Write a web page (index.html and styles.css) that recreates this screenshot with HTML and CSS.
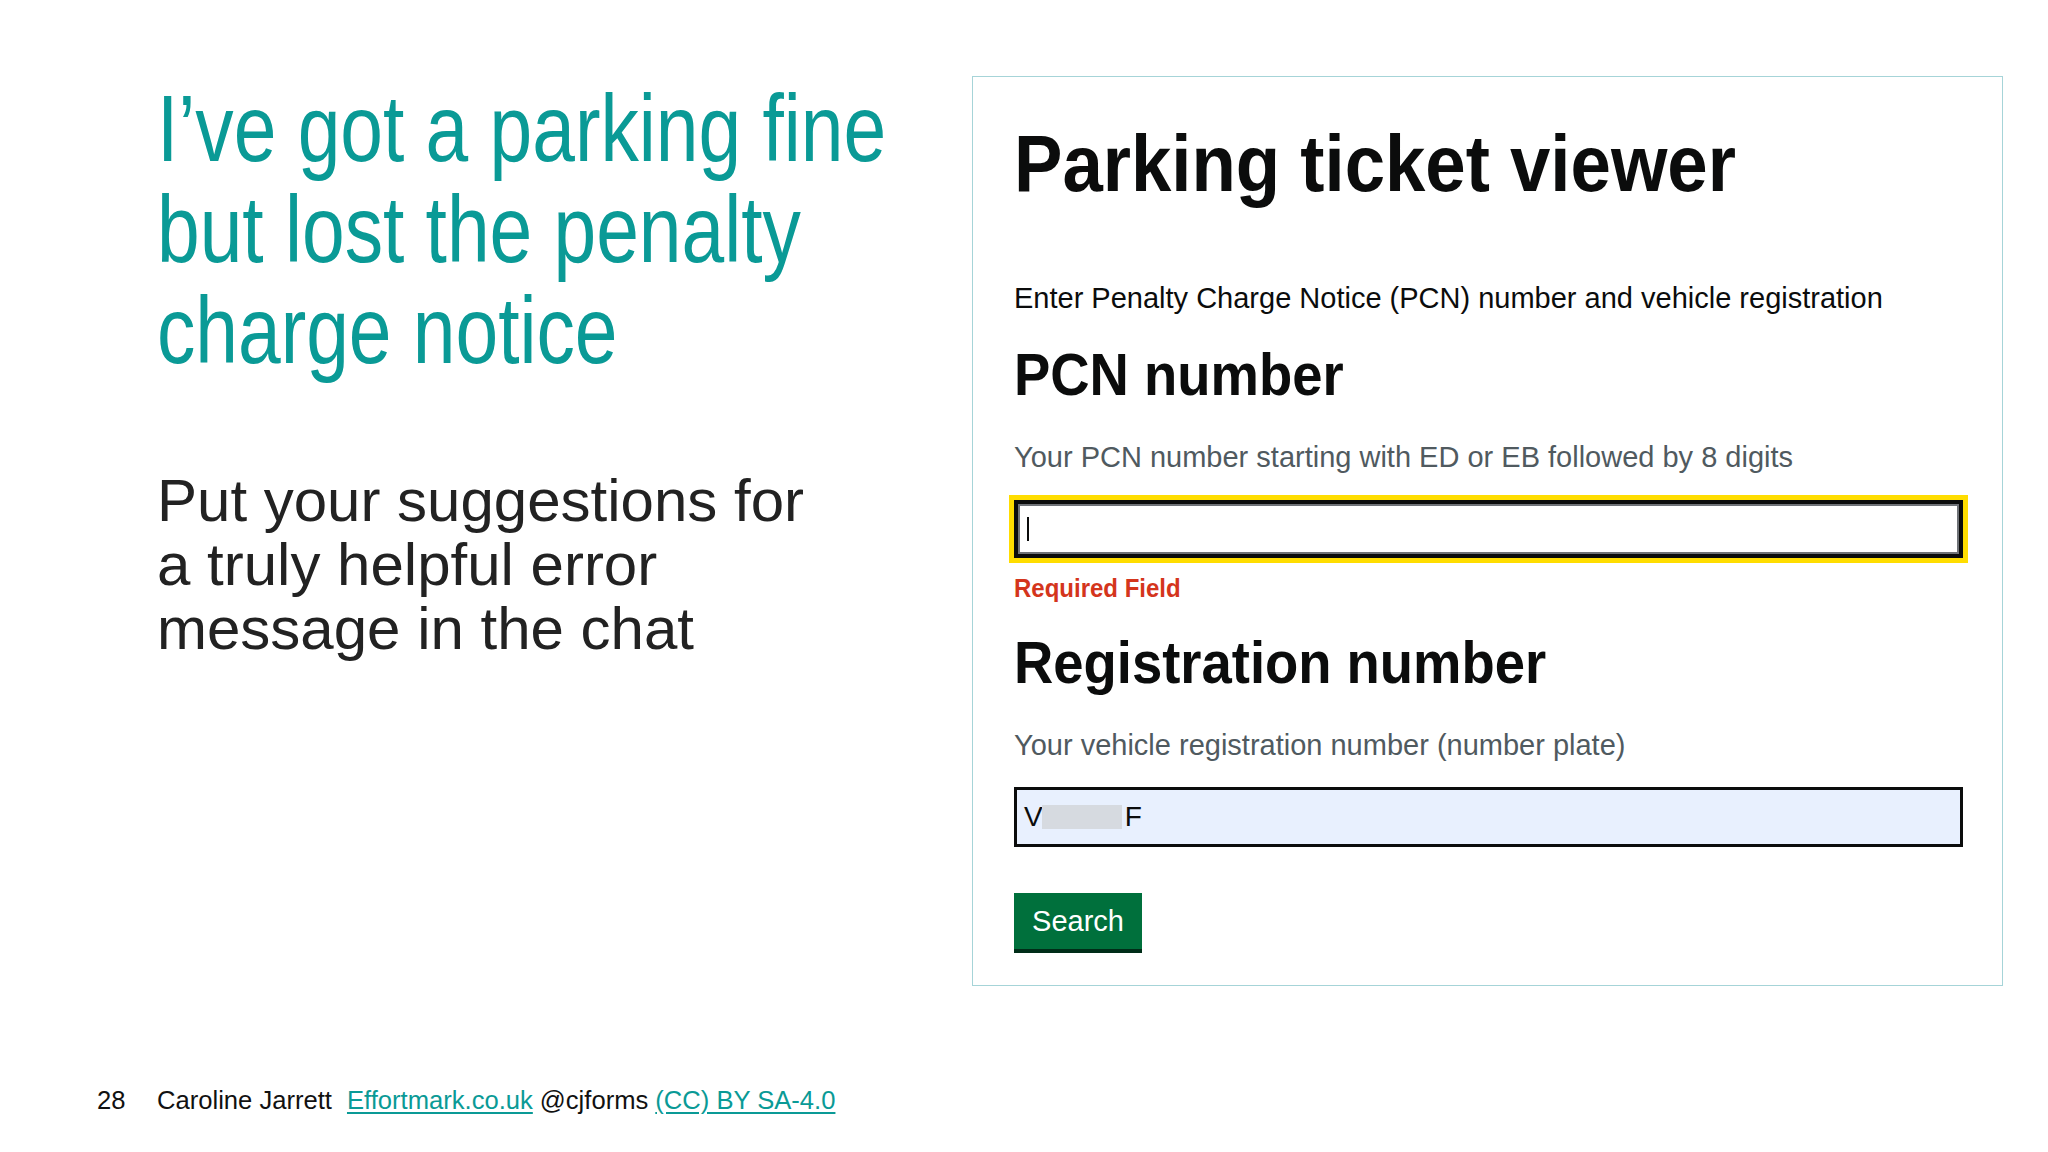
FILE: index.html
```html
<!DOCTYPE html>
<html lang="en">
<head>
<meta charset="utf-8">
<title>Parking ticket viewer</title>
<link rel="stylesheet" href="styles.css">
</head>
<body>
<div class="slide">
  <main class="main">
    <section class="left">
      <h1 class="title">I’ve got a parking fine<br>but lost the penalty<br>charge notice</h1>
      <p class="prompt">Put your suggestions for<br>a truly helpful error<br>message in the chat</p>
    </section>
    <section class="panel">
      <h2 class="pt-title squeeze">Parking ticket viewer</h2>
      <p class="intro">Enter Penalty Charge Notice (PCN) number and vehicle registration</p>
      <h3 class="label squeeze label-pcn">PCN number</h3>
      <p class="hint">Your PCN number starting with ED or EB followed by 8 digits</p>
      <div class="focus-ring">
        <div class="field field-pcn"><span class="caret"></span></div>
      </div>
      <p class="error">Required Field</p>
      <h3 class="label squeeze label-reg">Registration number</h3>
      <p class="hint">Your vehicle registration number (number plate)</p>
      <div class="field field-reg"><span class="plate">V</span><span class="redact"></span><span class="plate">F</span></div>
      <div class="button-row"><span class="button">Search</span></div>
    </section>
  </main>
  <footer class="footer">
    <span class="page-no">28</span>
    <span class="author">Caroline Jarrett</span>
    <a class="link site" href="#">Effortmark.co.uk</a>
    <span class="handle">@cjforms</span>
    <a class="link" href="#">(CC) BY SA-4.0</a>
  </footer>
</div>
</body>
</html>
```
FILE: styles.css
```css
html, body {
  margin: 0;
  padding: 0;
  background: #ffffff;
}
body {
  width: 2048px;
  height: 1152px;
  overflow: hidden;
  font-family: "Liberation Sans", Arial, sans-serif;
}
.slide {
  display: flex;
  flex-direction: column;
  height: 1152px;
}
.main {
  display: flex;
  padding: 76px 0 0 157px;
}
.left {
  width: 815px;
  flex: none;
}
.title {
  margin: 2px 0 0 0;
  font-family: "Liberation Sans", Arial, sans-serif;
  font-weight: 400;
  font-size: 94px;
  line-height: 101px;
  color: #0a9a96;
  white-space: nowrap;
  transform: scaleX(0.816);
  transform-origin: left top;
}
.prompt {
  margin: 88px 0 0 0;
  font-size: 60px;
  line-height: 64px;
  color: #222222;
}
.panel {
  width: 988px;
  flex: none;
  border: 1px solid #a6d4d8;
  padding: 47px 0 32px 41px;
  display: flex;
  flex-direction: column;
  align-items: flex-start;
  color: #0b0c0c;
}
.squeeze {
  transform: scaleX(0.907);
  transform-origin: left center;
  white-space: nowrap;
}
.pt-title {
  margin: 0;
  font-size: 80px;
  line-height: 80px;
  font-weight: 700;
}
.intro {
  margin: 77px 0 0 0;
  font-size: 29px;
  line-height: 35px;
  white-space: nowrap;
}
.label {
  margin: 0;
  font-size: 60px;
  line-height: 60px;
  font-weight: 700;
}
.label-pcn { margin-top: 29px; }
.label-reg { margin-top: 30px; }
.hint {
  margin: 35px 0 0 0;
  font-size: 29px;
  line-height: 35px;
  color: #505a5f;
  white-space: nowrap;
}
.focus-ring {
  margin: 20px 0 0 -5px;
  width: 949px;
  height: 58px;
  border: 5px solid #ffdd00;
}
.field {
  box-sizing: border-box;
  display: flex;
  align-items: center;
}
.field-pcn {
  width: 949px;
  height: 58px;
  border: 4px solid #0b0c0c;
  box-shadow: inset 0 0 0 2px #6f7277;
  background: #ffffff;
  padding-left: 9px;
}
.caret {
  width: 2px;
  height: 24px;
  background: #0b0c0c;
}
.error {
  margin: 10px 0 0 0;
  font-size: 25px;
  line-height: 30px;
  font-weight: 700;
  color: #d4351c;
  transform: scaleX(0.96);
  transform-origin: left center;
  white-space: nowrap;
}
.field-reg {
  margin-top: 24px;
  width: 949px;
  height: 60px;
  border: 3px solid #0b0c0c;
  background: #e8f0fe;
  padding-left: 7px;
  font-size: 28px;
  color: #0b0c0c;
}
.redact {
  width: 80px;
  height: 24px;
  background: #d6dae0;
  margin: 0 3px 0 -1px;
}
.plate {
  line-height: 30px;
}
.button-row {
  margin-top: 46px;
}
.button {
  display: flex;
  align-items: center;
  justify-content: center;
  box-sizing: border-box;
  width: 128px;
  height: 60px;
  padding-bottom: 4px;
  background: #00703c;
  box-shadow: inset 0 -4px 0 #002d18;
  color: #ffffff;
  font-size: 29px;
}
.footer {
  margin-top: 99px;
  padding-left: 97px;
  display: flex;
  align-items: baseline;
  font-size: 25.6px;
  line-height: 30px;
  color: #111111;
}
.page-no {
  width: 60px;
}
.author {
  margin-right: 15px;
}
.link {
  color: #0a9a96;
  text-decoration: underline;
  text-underline-offset: 3px;
}
.handle {
  margin: 0 7px 0 7px;
}
```
